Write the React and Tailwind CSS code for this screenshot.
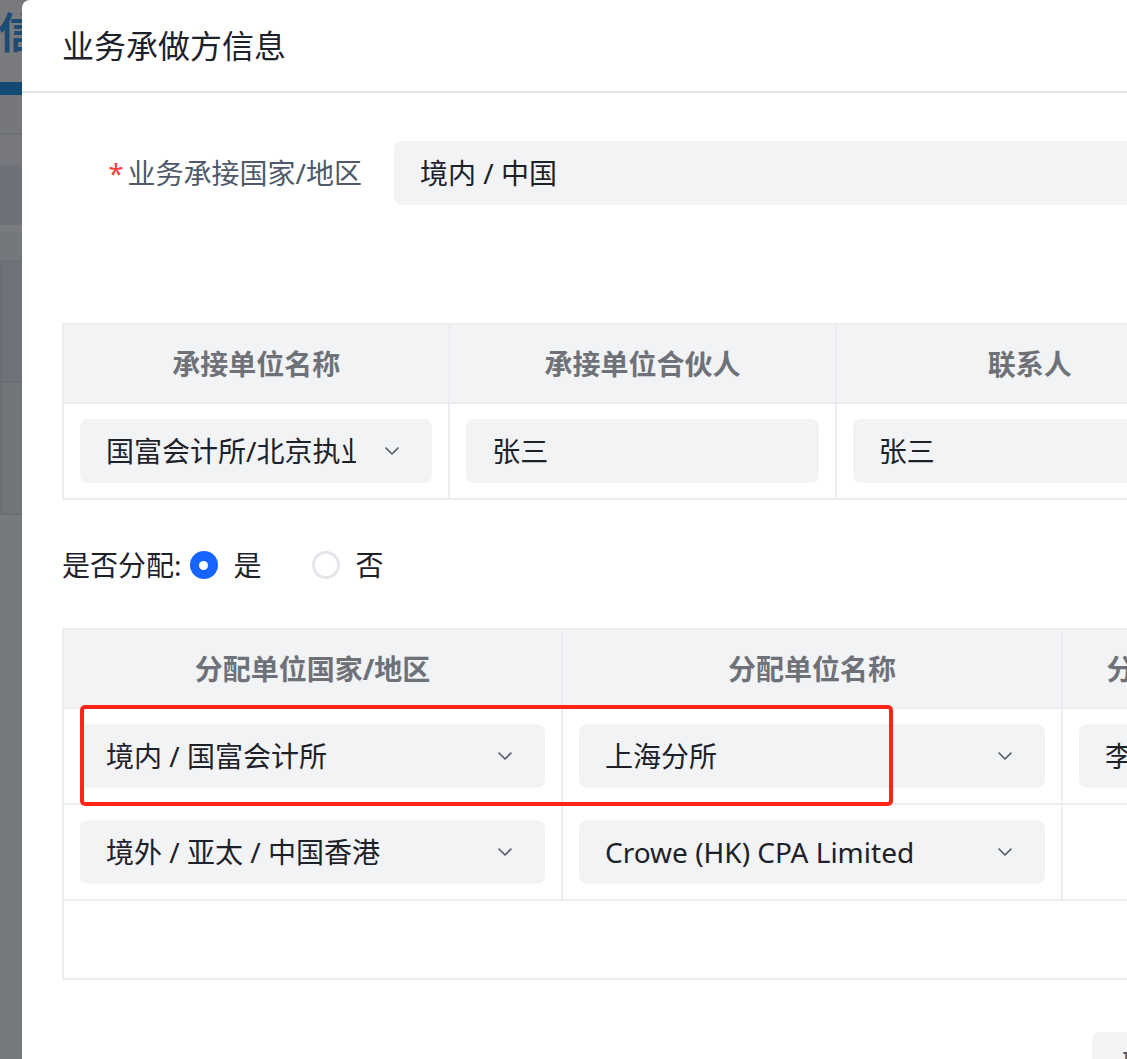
import React from "react";
import { ChevronDown } from "lucide-react";

const font = { fontFamily: '"Noto Sans", "Noto Sans CJK SC", sans-serif' };

function Select({ value }) {
  return (
    <div className="h-[64px] bg-[#f2f3f5] rounded-[8px] flex items-center pl-[26px] pr-[28px] gap-[24px]">
      <span className="flex-1 min-w-0 text-[28px] text-[#1d2129] whitespace-nowrap overflow-hidden">
        {value}
      </span>
      <ChevronDown className="w-[24px] h-[24px] text-[#4e5969] shrink-0" strokeWidth={1.6} />
    </div>
  );
}

function Input({ value }) {
  return (
    <div className="h-[64px] bg-[#f2f3f5] rounded-[8px] flex items-center pl-[26px] text-[28px] text-[#1d2129] whitespace-nowrap overflow-hidden">
      {value}
    </div>
  );
}

function HeadCell({ children, last }) {
  return (
    <div
      className={`h-[77px] flex items-center justify-center text-[28px] font-bold text-[#6e7278] whitespace-nowrap overflow-hidden ${
        last ? "" : "border-r-2 border-[#ebedf0]"
      }`}
    >
      {children}
    </div>
  );
}

function Cell({ children, last }) {
  return (
    <div className={`px-[16px] py-[15px] ${last ? "" : "border-r-2 border-[#ebedf0]"}`}>
      {children}
    </div>
  );
}

export default function App() {
  return (
    <div className="w-[1127px] h-[1059px] overflow-hidden flex items-start bg-[#75787d]" style={font}>
      {/* page behind the mask */}
      <div className="w-[22px] h-[1059px] shrink-0 flex flex-col overflow-hidden">
        <div className="h-[82px] shrink-0 bg-[#787a7e] flex items-start">
          <span className="-ml-[2px] text-[42px] font-bold text-[#1c4c75] leading-none mt-[11px]">
            信
          </span>
        </div>
        <div className="h-[13px] shrink-0 bg-[#134a74]" />
        <div className="h-[40px] shrink-0 bg-[#75777c] border-b-2 border-[#6c6f74]" />
        <div className="h-[30px] shrink-0 bg-[#76787d]" />
        <div className="h-[60px] shrink-0 bg-[#6e7177]" />
        <div className="h-[7px] shrink-0 bg-[#7a7c81]" />
        <div className="h-[30px] shrink-0 bg-[#74777c] border-b-2 border-[#6c6f74]" />
        <div className="h-[121px] shrink-0 bg-[#6f7278] border-l-2 border-b-2 border-[#6a6d72]" />
        <div className="h-[132px] shrink-0 bg-[#72757a] border-l-2 border-b-2 border-[#6a6d72]" />
        <div className="flex-1 bg-[#76797e]" />
      </div>

      {/* modal */}
      <div className="w-[1366px] min-h-[1059px] shrink-0 bg-white rounded-tl-[8px]">
        <div className="h-[93px] border-b-2 border-[#e5e6eb] flex items-center pl-[40px] text-[32px] text-[#1d2129]">
          业务承做方信息
        </div>

        <div className="px-[40px] pt-[48px]">
          <div className="flex items-center h-[64px]">
            <div className="w-[300px] text-right text-[28px] text-[#4e5969] whitespace-nowrap">
              <span className="text-[#f53f3f] mr-[4px]">*</span>
              业务承接国家/地区
            </div>
            <div className="flex-1 ml-[32px]">
              <Input value="境内 / 中国" />
            </div>
          </div>

          {/* 承接单位 */}
          <div className="mt-[118px] w-[1163px] border-2 border-[#ebedf0]">
            <div className="grid grid-cols-3 bg-[#f2f3f5]">
              <HeadCell>承接单位名称</HeadCell>
              <HeadCell>承接单位合伙人</HeadCell>
              <HeadCell last>联系人</HeadCell>
            </div>
            <div className="grid grid-cols-3 border-t-2 border-[#ebedf0]">
              <Cell>
                <Select value="国富会计所/北京执业" />
              </Cell>
              <Cell>
                <Input value="张三" />
              </Cell>
              <Cell last>
                <Input value="张三" />
              </Cell>
            </div>
          </div>

          {/* 是否分配 */}
          <div className="mt-[45px] h-[40px] flex items-center text-[28px] text-[#1d2129]">
            <span>是否分配:</span>
            <span className="ml-[8px] w-[28px] h-[28px] rounded-full bg-[#1664ff] flex items-center justify-center">
              <span className="w-[9px] h-[9px] rounded-full bg-white" />
            </span>
            <span className="ml-[16px]">是</span>
            <span className="ml-[50px] w-[28px] h-[28px] rounded-full border-[3px] border-[#e5e6eb]" />
            <span className="ml-[16px]">否</span>
          </div>

          {/* 分配单位 */}
          <div className="relative mt-[43px] w-[1286px] border-2 border-[#ebedf0]">
            <div className="grid grid-cols-[499px_500px_1fr] bg-[#f2f3f5]">
              <HeadCell>分配单位国家/地区</HeadCell>
              <HeadCell>分配单位名称</HeadCell>
              <HeadCell last>分配单位联系人</HeadCell>
            </div>
            <div className="grid grid-cols-[499px_500px_1fr] border-t-2 border-[#ebedf0]">
              <Cell>
                <Select value="境内 / 国富会计所" />
              </Cell>
              <Cell>
                <Select value="上海分所" />
              </Cell>
              <Cell last>
                <Input value="李四" />
              </Cell>
            </div>
            <div className="grid grid-cols-[499px_500px_1fr] border-t-2 border-[#ebedf0]">
              <Cell>
                <Select value="境外 / 亚太 / 中国香港" />
              </Cell>
              <Cell>
                <Select value="Crowe (HK) CPA Limited" />
              </Cell>
              <Cell last>
                <div className="h-[64px]" />
              </Cell>
            </div>
            <div className="h-[79px] border-t-2 border-[#ebedf0]" />

            {/* annotation box */}
            <div className="absolute left-[16px] top-[75px] w-[813px] h-[101px] border-[4px] border-[#ff2418] rounded-[5px] pointer-events-none" />
          </div>

          <div className="mt-[52px] flex justify-end gap-[24px]">
            <button className="h-[64px] px-[30px] rounded-[8px] bg-[#f2f3f5] text-[28px] text-[#4e5969]">
              取消
            </button>
            <button className="h-[64px] px-[30px] rounded-[8px] bg-[#1664ff] text-[28px] text-white">
              确定
            </button>
          </div>
        </div>
      </div>
    </div>
  );
}
